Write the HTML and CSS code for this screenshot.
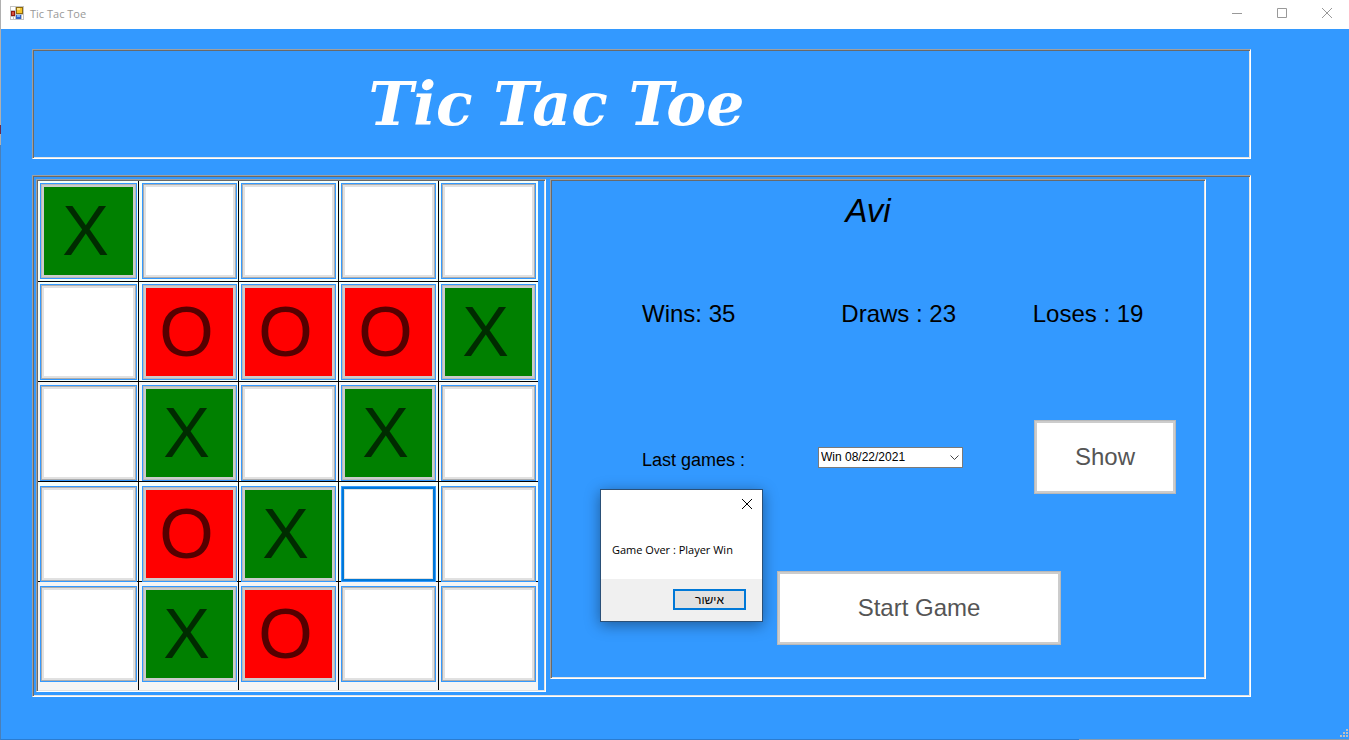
FILE: index.html
```html
<!DOCTYPE html>
<html lang="en">
<head>
<meta charset="utf-8">
<title>Tic Tac Toe</title>
<link rel="stylesheet" href="styles.css">
</head>
<body>
<div class="window">
  <header class="titlebar">
    <svg class="app-icon" width="14" height="14" viewBox="0 0 14 14" shape-rendering="crispEdges" aria-hidden="true">
      <rect width="14" height="14" fill="#c3c3c3"/>
      <rect x="1" y="1" width="4" height="3" fill="#fff"/>
      <rect x="1" y="11" width="2" height="2" fill="#fff"/><rect x="4" y="11" width="1" height="2" fill="#fff"/>
      <rect x="12" y="9" width="1" height="4" fill="#fff"/>
      <rect x="1" y="5" width="4" height="5" fill="#8f1a10"/><rect x="2" y="6" width="2" height="3" fill="#d8503c"/>
      <rect x="6" y="1" width="7" height="7" fill="#8d6a10"/><rect x="7" y="2" width="5" height="5" fill="#f7c52c"/><rect x="7" y="2" width="3" height="2" fill="#ffe58a"/>
      <rect x="6" y="9" width="5" height="4" fill="#2f62c8"/><rect x="7" y="9" width="3" height="2" fill="#7fb0f5"/>
    </svg>
    <span class="caption">Tic Tac Toe</span>
    <div class="controls">
      <button class="control" aria-label="Minimize"><svg width="10" height="10" viewBox="0 0 10 10"><path d="M0 5.5H10"/></svg></button>
      <button class="control" aria-label="Maximize"><svg width="10" height="10" viewBox="0 0 10 10"><path d="M.5 .5H9.5V9.5H.5Z"/></svg></button>
      <button class="control" aria-label="Close"><svg width="10" height="10" viewBox="0 0 10 10"><path d="M0 0L10 10M10 0L0 10"/></svg></button>
    </div>
  </header>
  <main class="form">
    <section class="panel banner"><h1 class="title">Tic Tac Toe</h1></section>
    <section class="panel content">
      <div class="panel board">
        <div class="grid">
          <div class="cell mint top first"><button class="tile x">X</button></div>
          <div class="cell mint top"><button class="tile" aria-label="Empty"></button></div>
          <div class="cell mint top"><button class="tile" aria-label="Empty"></button></div>
          <div class="cell mint top"><button class="tile" aria-label="Empty"></button></div>
          <div class="cell mint top"><button class="tile" aria-label="Empty"></button></div>

          <div class="cell mint first"><button class="tile" aria-label="Empty"></button></div>
          <div class="cell mint"><button class="tile o">O</button></div>
          <div class="cell mint"><button class="tile o">O</button></div>
          <div class="cell mint"><button class="tile o">O</button></div>
          <div class="cell mint"><button class="tile x">X</button></div>

          <div class="cell low first"><button class="tile" aria-label="Empty"></button></div>
          <div class="cell low"><button class="tile x">X</button></div>
          <div class="cell low"><button class="tile" aria-label="Empty"></button></div>
          <div class="cell low"><button class="tile x">X</button></div>
          <div class="cell low"><button class="tile" aria-label="Empty"></button></div>

          <div class="cell mint lower first"><button class="tile" aria-label="Empty"></button></div>
          <div class="cell mint lower"><button class="tile o">O</button></div>
          <div class="cell mint lower"><button class="tile x">X</button></div>
          <div class="cell mint lower"><button class="tile focus" aria-label="Empty"></button></div>
          <div class="cell mint lower"><button class="tile" aria-label="Empty"></button></div>

          <div class="cell last first"><button class="tile" aria-label="Empty"></button></div>
          <div class="cell last"><button class="tile x">X</button></div>
          <div class="cell last"><button class="tile o">O</button></div>
          <div class="cell last"><button class="tile" aria-label="Empty"></button></div>
          <div class="cell last"><button class="tile" aria-label="Empty"></button></div>
        </div>
      </div>
      <div class="panel info">
        <h2 class="player">Avi</h2>
        <div class="stats"><span>Wins: 35</span><span>Draws : 23</span><span>Loses : 19</span></div>
        <div class="history">
          <label class="history-label" for="games">Last games :</label>
          <div class="combo">
            <select id="games"><option>Win 08/22/2021</option></select>
            <svg class="arrow" width="9" height="6" viewBox="0 0 9 6"><path d="M.5 .5L4.5 4.5L8.5 .5"/></svg>
          </div>
          <button class="action">Show</button>
        </div>
        <div class="start"><button class="action">Start Game</button></div>
        <div class="dialog" role="dialog" aria-label="Game Over">
          <div class="dialog-top"><button class="dialog-close" aria-label="Close"><svg width="10" height="10" viewBox="0 0 10 10"><path d="M0 0L10 10M10 0L0 10"/></svg></button></div>
          <p class="message">Game Over : Player Win</p>
          <div class="dialog-footer"><button class="ok" lang="he" dir="rtl">אישור</button></div>
        </div>
      </div>
    </section>
  </main>
  <svg class="grip" width="8" height="8" viewBox="0 0 8 8" shape-rendering="crispEdges" aria-hidden="true"><path d="M6 0h2v2H6zM3 3h2v2H3zM6 3h2v2H6zM0 6h2v2H0zM3 6h2v2H3zM6 6h2v2H6z"/></svg>
</div>
</body>
</html>
```

FILE: styles.css
```css
* { box-sizing: border-box; }

body {
  margin: 0;
  font-family: "Liberation Sans", Arial, sans-serif;
  color: #000;
}

button { font-family: inherit; cursor: pointer; }

.window {
  position: relative;
  min-height: 100vh;
  background: #3399ff;
  border-left: 1px solid #4a7fb8;
  border-bottom: 1px solid #2b7cd0;
}
/* lighter stretch of the bottom window edge */
.window::after {
  content: "";
  position: absolute;
  right: 0;
  bottom: -1px;
  width: 20%;
  height: 1px;
  background: #8b9bab;
}
/* lighter stretch of the left window edge */
.window::before {
  content: "";
  position: absolute;
  left: -1px;
  top: 0;
  width: 1px;
  height: 145px;
  background: linear-gradient(#b0b0b0 125px, #6b2a48 125px 134px, #b0b0b0 134px);
}

.titlebar {
  display: flex;
  align-items: center;
  height: 29px;
  padding-left: 9px;
  background: #fff;
}
.app-icon { margin-bottom: 3px; }
.caption {
  margin-left: 6px;
  padding-bottom: 2px;
  font: 11px/16px "Open Sans", "Noto Sans", sans-serif;
  color: #999;
}
.controls { display: flex; margin-left: auto; }
.control {
  display: flex;
  justify-content: center;
  width: 46px;
  margin-left: -1px;
  padding: 0 0 3px 2px;
  border: 0;
  background: none;
}
.control path { fill: none; stroke: #999; }

.form { padding: 20px 98px 42px 31px; }

.panel {
  border: 1px solid;
  border-color: #a0a0a0 #fff #fff #a0a0a0;
  box-shadow: inset 1px 1px #696969, inset -1px -1px #e3e3e3;
  padding: 1px;
}

.banner { height: 110px; }
.title {
  margin: 0;
  padding: 20px 170px 0 0;
  text-align: center;
  font: italic bold 60px/66px "DejaVu Serif", serif;
  color: #fff;
}

.content {
  display: grid;
  grid-template-columns: 510fr 656fr;
  align-items: start;
  gap: 4px;
  margin-top: 16px;
  padding: 3px 44px 4px 3px;
}

.board { padding-right: 7px; }
.grid {
  display: grid;
  grid-template-columns: repeat(5, 1fr);
}
.cell {
  height: 100px;
  padding: 2px 2px 0;
  border-left: 1px solid #000;
  border-bottom: 1px solid #000;
  background: #f5f5f5;
}
.cell.mint { background: #f5fffa; }
.cell.top { height: 101px; }
.cell.first { padding-right: 1px; border-left: 0; }
.cell:nth-child(5n+2) { padding-left: 3px; padding-right: 1px; }
.cell.low { padding-top: 3px; }
.cell.lower { padding-top: 4px; }
.cell.last { height: 108px; padding-top: 4px; border-bottom: 0; }

.tile {
  display: flex;
  align-items: center;
  justify-content: center;
  width: 100%;
  height: 96px;
  padding: 0 6px 1px 0;
  border: 1px solid #3399ff;
  background: #fff;
  box-shadow: inset 0 0 0 1px #adadad, inset 0 0 0 3px #e1e1e1;
  font-size: 70px;
  line-height: 80px;
}
.tile.x { background: #008000; color: #002b00; }
.tile.o { background: #f00; color: #500; }
.tile.x, .tile.o { box-shadow: inset 0 0 0 1px #b8b8b8, inset 0 0 0 3px #ccc; }
.tile.focus { box-shadow: inset 0 0 0 2px #0078d7, inset 0 0 0 3px #e1e1e1; }

.info {
  position: relative;
  height: 500px;
  padding-top: 12px;
}
.player {
  margin: 0;
  padding-right: 20px;
  text-align: center;
  font: italic 33px/38px "Liberation Sans", Arial, sans-serif;
}
.stats {
  display: grid;
  grid-template-columns: 199fr 191fr 171fr;
  margin-top: 70px;
  padding-left: 90px;
  font-size: 24px;
  line-height: 28px;
}
.history {
  display: grid;
  grid-template-columns: 176fr 145fr 71fr 142fr;
  align-items: center;
  margin-top: 92px;
  padding: 0 28px 0 90px;
}
.history-label { padding-top: 6px; font-size: 18px; line-height: 24px; white-space: nowrap; }
.combo { position: relative; }
.combo select {
  display: block;
  appearance: none;
  width: 100%;
  height: 21px;
  padding: 0 20px 0 2px;
  border: 1px solid #7a7a7a;
  border-radius: 0;
  background: #fff;
  color: #000;
  font: 12px/16px "Liberation Sans", Arial, sans-serif;
}
.arrow { position: absolute; right: 4px; top: 8px; fill: none; stroke: #444; pointer-events: none; }
.history .action { grid-column: 4; }
.action {
  width: 100%;
  height: 74px;
  padding: 0;
  border: 1px solid #b9b9b9;
  background: #fff;
  box-shadow: inset 0 0 0 2px #ccc;
  color: #555;
  font-size: 24px;
  line-height: 28px;
}
.start {
  display: grid;
  grid-template-columns: 225fr 284fr 143fr;
  margin-top: 77px;
}
.start .action { grid-column: 2; }

.dialog {
  position: absolute;
  left: 49px;
  top: 309px;
  width: 163px;
  border: 1px solid #2a5078;
  background: #fff;
  box-shadow: 0 3px 14px rgba(0, 0, 0, .4);
  font: 11px/16px "Open Sans", "Noto Sans", sans-serif;
}
.dialog-top { display: flex; justify-content: flex-end; padding: 9px 10px 0; }
.dialog-close { display: flex; padding: 0; border: 0; background: none; }
.dialog-close path { stroke: #000; }
.message { margin: 0; padding: 33px 0 21px 11px; white-space: nowrap; }
.dialog-footer { display: flex; justify-content: flex-end; padding: 10px 16px 11px; background: #f0f0f0; }
.ok {
  width: 73px;
  height: 21px;
  padding: 0;
  border: 2px solid #0078d7;
  background: #e1e1e1;
  color: #000;
  font: 12px/16px "Liberation Sans", "DejaVu Sans", sans-serif;
}

.grip { position: absolute; right: 1px; bottom: 2px; fill: #c0c0c0; }
```
